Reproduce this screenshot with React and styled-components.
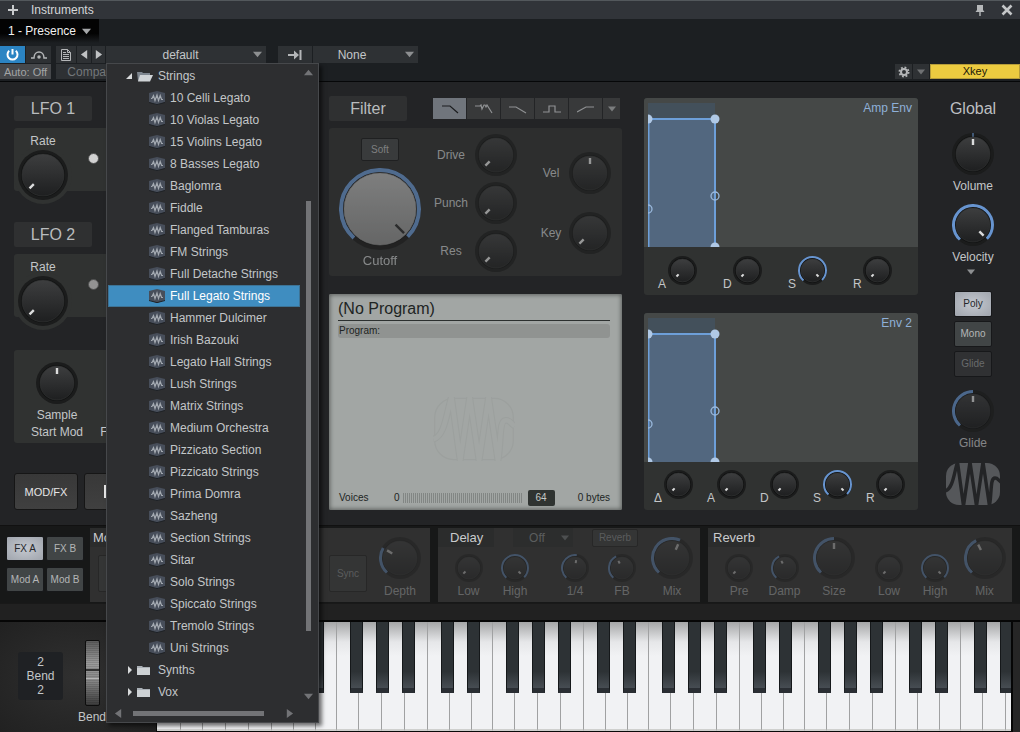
import { useId, useState } from "react";
import styled, { createGlobalStyle, css } from "styled-components";

const GlobalStyle = createGlobalStyle`
  * {
    box-sizing: border-box;
  }

  body {
    margin: 0;
    background: #232426;
    color: #c3c6c8;
    font-family: "Liberation Sans", Arial, sans-serif;
    font-size: 12px;
    line-height: 14px;
  }

  button, select, input {
    margin: 0;
    padding: 0;
    border: none;
    font: inherit;
    color: inherit;
  }

  h1, h2, h3, p, ul {
    margin: 0;
    padding: 0;
    font-weight: normal;
    list-style: none;
  }

  svg {
    display: block;
    flex: none;
  }
`;

/* ---------- data ---------- */

const presets = [
  "10 Celli Legato",
  "10 Violas Legato",
  "15 Violins Legato",
  "8 Basses Legato",
  "Baglomra",
  "Fiddle",
  "Flanged Tamburas",
  "FM Strings",
  "Full Detache Strings",
  "Full Legato Strings",
  "Hammer Dulcimer",
  "Irish Bazouki",
  "Legato Hall Strings",
  "Lush Strings",
  "Matrix Strings",
  "Medium Orchestra",
  "Pizzicato Section",
  "Pizzicato Strings",
  "Prima Domra",
  "Sazheng",
  "Section Strings",
  "Sitar",
  "Solo Strings",
  "Spiccato Strings",
  "Tremolo Strings",
  "Uni Strings",
];

const filterTypes = [
  { name: "Low pass", path: "M1 2 H9 L17 9" },
  { name: "Ladder", path: "M0 2 H5 L6 1 L7 5 L9 1 H10 L11 3 L12 1 L17 9" },
  { name: "Low pass 12", path: "M0 3 H7 L17 9" },
  { name: "Band pass", path: "M0 8 H6 V2 H12 V8 H18" },
  { name: "High pass", path: "M0 8 L9 3 H17" },
];

/* ---------- knob ---------- */

const KnobBox = styled.span`
  display: grid;
  grid-template: 100% / 100%;
  flex: none;
  width: ${(p) => p.$size}px;
  height: ${(p) => p.$size}px;

  > * {
    grid-area: 1 / 1;
  }

  input {
    min-width: 0;
    width: 100%;
    height: 100%;
    opacity: 0;
    cursor: pointer;
  }
`;

function point(center, radius, deg) {
  const rad = ((deg - 90) * Math.PI) / 180;
  return [center + radius * Math.cos(rad), center + radius * Math.sin(rad)];
}

function arc(center, radius, from, to) {
  const [x1, y1] = point(center, radius, from);
  const [x2, y2] = point(center, radius, to);
  const large = to - from > 180 ? 1 : 0;
  return `M${x1} ${y1} A${radius} ${radius} 0 ${large} 1 ${x2} ${y2}`;
}

function Knob({ size = 42, value = 0, fill = false, center = false, light = false, label }) {
  const [current, setCurrent] = useState(value);
  const id = useId();
  const c = size / 2;
  const small = size < 35;
  const ring = light ? 4 : small ? 2 : 3;
  const face = c - ring - 1;
  const deg = -135 + current * 270;
  const tip = face - (light ? 2 : small ? 3 : 2);
  const tail = tip - (light ? 12 : small ? 3 : 6);
  const [x1, y1] = point(c, tip, deg);
  const [x2, y2] = point(c, tail, deg);

  return (
    <KnobBox $size={size}>
      <svg width={size} height={size} viewBox={`0 0 ${size} ${size}`} aria-hidden="true">
        <defs>
          <linearGradient id={id} x1="0" y1="0" x2="0" y2="1">
            <stop offset="0" stopColor={light ? "#b4b5b5" : "#3d3e3f"} />
            <stop offset="1" stopColor={light ? "#8b8c8c" : "#1e1f20"} />
          </linearGradient>
        </defs>
        <circle cx={c} cy={c} r={c} fill="#1b1c1c" />
        <circle cx={c} cy={c} r={c - ring} fill="#101111" />
        {fill && current > 0 && (
          <path
            d={arc(c, c - ring / 2, -138, deg)}
            fill="none"
            stroke="#6794cf"
            strokeWidth={ring}
          />
        )}
        {center && <path d={`M${c} 0 V4`} stroke="#6794cf" />}
        <circle
          cx={c}
          cy={c}
          r={face}
          fill={`url(#${id})`}
          stroke={light ? "#9b9c9c" : "#343536"}
          strokeWidth="0.6"
        />
        <path
          d={`M${x1} ${y1} L${x2} ${y2}`}
          stroke={light ? "#2a2b2c" : "#dcdddd"}
          strokeWidth={small ? 2 : 2.4}
        />
      </svg>
      <input
        type="range"
        min="0"
        max="1"
        step="0.01"
        aria-label={label}
        value={current}
        onChange={(e) => setCurrent(Number(e.target.value))}
      />
    </KnobBox>
  );
}

/* ---------- title and tool bars ---------- */

const Page = styled.div`
  min-height: 100vh;
  display: flex;
  flex-direction: column;
`;

const TitleBar = styled.header`
  display: flex;
  align-items: center;
  height: 19px;
  padding: 0 7px;
  border-top: 1px solid #53585c;
  background: #313439;
  color: #d4d6d8;

  h1 {
    margin-left: 12px;
    margin-right: auto;
    font-size: 12px;
  }
`;

const IconButton = styled.button`
  display: flex;
  align-items: center;
  justify-content: center;
  background: none;
  cursor: pointer;
`;

const CloseButton = styled(IconButton)`
  margin-left: 16px;
`;

const TabBar = styled.nav`
  height: 27px;
  background: #1c1f22;
`;

const Tab = styled.button`
  display: flex;
  align-items: center;
  gap: 6px;
  height: 24px;
  padding: 0 8px;
  background: linear-gradient(#030303 60%, #1c1f22);
  color: #f1f1f1;
`;

const ToolBar = styled.div`
  display: flex;
  padding-bottom: 2px;
  border-bottom: 1px solid #060708;
  background: #1c1f22;
`;

const ToolGroup = styled.div`
  display: flex;
  flex-direction: column;
  gap: 1px;
  margin-right: ${(p) => p.$gap || 0}px;
`;

const ToolRow = styled.div`
  display: flex;
  gap: 1px;
`;

const ToolButton = styled.button`
  display: flex;
  align-items: center;
  justify-content: center;
  width: ${(p) => p.$width}px;
  height: ${(p) => (p.$low ? 15 : 17)}px;
  background: ${(p) => (p.$on ? "#2b84c3" : "#2e3134")};
  color: ${(p) => (p.$on ? "#fff" : "#b4b6b8")};
`;

const AutoButton = styled(ToolButton)`
  width: 51px;
  background: #46484b;
  color: #a3a5a6;
  font-size: 11px;
`;

const CompareButton = styled(ToolButton)`
  width: 72px;
  color: #73777a;
`;

const PresetCell = styled.div`
  position: relative;
`;

const PresetButton = styled(ToolButton)`
  width: 160px;
  padding-right: 4px;
  color: #c3c6c8;

  span {
    flex: 1;
    padding-left: 2px;
  }
`;

const SelectBox = styled.span`
  display: flex;
  align-items: center;
  width: ${(p) => p.$width}px;
  height: ${(p) => p.$height}px;
  padding-right: 4px;
  background: ${(p) => p.$bg};

  select {
    flex: 1;
    min-width: 0;
    padding-right: ${(p) => p.$shift || 0}px;
    appearance: none;
    background: none;
    text-align-last: center;
    outline: none;
  }
`;

const DeviceGroup = styled.div`
  display: flex;
  align-items: flex-end;
  gap: 1px;
  margin-left: auto;
`;

const DeviceButton = styled.button`
  width: 90px;
  height: 15px;
  border: 1px solid #b69d3a;
  background: #eccb40;
  color: #1a1708;
  font-size: 11px;
  line-height: 13px;
`;

/* ---------- preset menu ---------- */

const Menu = styled.div`
  position: absolute;
  top: 17px;
  left: 0;
  z-index: 10;
  width: 213px;
  padding: 1px;
  border: 1px solid #46484b;
  background: #2d2e30;
  box-shadow: 3px 3px 4px rgba(0, 0, 0, 0.55);
`;

const MenuBody = styled.div`
  display: flex;
`;

const Tree = styled.ul`
  flex: 1;
`;

const TreeItem = styled.li`
  display: flex;
  align-items: center;
  gap: 5px;
  height: 22px;
  padding-left: ${(p) => (p.$folder ? 18 : 41)}px;
  ${(p) =>
    p.$selected &&
    css`
      background: #3f8dc0;
      box-shadow: inset 0 0 0 1px #3d7395;
      color: #fff;
    `}
`;

const ScrollColumn = styled.div`
  display: flex;
  flex-direction: column;
  align-items: center;
  width: 17px;
  padding: 3px 0 2px;
`;

const ScrollThumb = styled.div`
  width: 5px;
  height: 430px;
  margin: 124px 0 auto;
  background: #727376;
`;

const ScrollRow = styled.div`
  display: flex;
  align-items: center;
  height: 18px;
  padding: 2px 23px 0 6px;
`;

const ScrollBar = styled.div`
  width: 131px;
  height: 5px;
  margin: 0 auto 0 10px;
  background: #727376;
`;

/* ---------- synth body ---------- */

const Body = styled.main`
  display: grid;
  grid-template-columns: 293fr 293fr 274fr 66fr;
  column-gap: 22px;
  padding: 14px 14px 15px;
  background: #232426;
`;

const Column = styled.section`
  display: flex;
  flex-direction: column;
  min-width: 0;
`;

const Plate = styled.h2`
  width: 78px;
  height: 25px;
  margin-bottom: 7px;
  border-radius: 2px;
  background: #2f3031;
  color: #b9bcbe;
  font-size: 16px;
  line-height: 25px;
  text-align: center;
`;

const LfoPanel = styled.div`
  display: flex;
  align-items: flex-start;
  height: 63px;
  margin-bottom: 31px;
  border-radius: 3px;
  background: #303231;
`;

const LfoRate = styled.label`
  display: flex;
  flex-direction: column;
  align-items: center;
  gap: 2px;
  padding-top: 6px;
`;

const LfoKnobRing = styled.span`
  padding: 4px;
  margin-top: -4px;
  border-radius: 50%;
  background: #303231;
`;

const Led = styled.button`
  width: 11px;
  height: 11px;
  margin: 25px 0 0 16px;
  border: 1px solid #4d4e4e;
  border-radius: 50%;
  background: ${(p) => (p.$on ? "#d2d2d2" : "#939393")};
`;

const SamplePanel = styled.div`
  display: flex;
  height: 93px;
  margin: 2px 0 30px;
  padding: 12px 7px;
  border-radius: 3px;
  background: #303231;
`;

const Field = styled.label`
  display: flex;
  flex-direction: column;
  align-items: center;
  gap: ${(p) => p.$gap || 4}px;
  width: ${(p) => (p.$width ? `${p.$width}px` : "auto")};
  text-align: center;
  line-height: ${(p) => p.$line || 14}px;
  opacity: ${(p) => (p.$dim ? 0.6 : 1)};
`;

const PageButtons = styled.div`
  display: flex;
  gap: 6px;
`;

const PageButton = styled.button`
  display: flex;
  align-items: center;
  justify-content: center;
  width: 64px;
  height: 37px;
  border: 1px solid #161616;
  border-radius: 3px;
  background: linear-gradient(#383838, #404040);
  color: #e6e6e6;
  font-size: 11px;
`;

const FilterHead = styled.div`
  display: flex;
  justify-content: space-between;
  align-items: flex-start;
`;

const TypeButtons = styled.div`
  display: flex;
  gap: 1px;
  padding: 2px 2px 0 0;
`;

const TypeButton = styled.button`
  display: flex;
  align-items: center;
  justify-content: center;
  width: ${(p) => (p.$narrow ? 17 : 33)}px;
  height: 21px;
  background: ${(p) => (p.$on ? "#70757c" : "#38393a")};
  color: ${(p) => (p.$on ? "#1b1c1e" : "#8f9193")};
`;

const FilterPanel = styled.div`
  display: flex;
  align-items: flex-start;
  height: 148px;
  margin-bottom: 18px;
  padding-left: 10px;
  border-radius: 3px;
  background: #2d2e2e;
`;

const Disabled = styled.div`
  display: flex;
  flex-direction: column;
  align-items: center;
  gap: ${(p) => p.$gap}px;
  margin: ${(p) => p.$margin};
  opacity: 0.6;
`;

const SideField = styled.label`
  display: flex;
  align-items: center;
  gap: 4px;

  > span:first-child {
    width: ${(p) => p.$label}px;
    text-align: center;
  }
`;

const SmallButton = styled.button`
  width: 38px;
  height: ${(p) => p.$height || 26}px;
  border: 1px solid #17181a;
  border-radius: 2px;
  background: ${(p) => (p.$on ? "radial-gradient(#c4c8cf, #a0a5ad)" : "#414546")};
  color: ${(p) => (p.$on ? "#24272a" : "#b4b6b7")};
  font-size: 10px;

  &:disabled {
    background: #303133;
    color: #696b6c;
  }
`;

const CutoffLabel = styled.span`
  font-size: 13px;
`;

const Display = styled.div`
  display: flex;
  flex-direction: column;
  flex: 1;
  padding: 6px 12px 4px 9px;
  border-radius: 2px;
  background: #a2a6a4;
  box-shadow: inset 0 0 4px 1px #5c605e;
  color: #202423;
  font-size: 10px;

  h2 {
    padding-bottom: 2px;
    border-bottom: 1px solid #2c302f;
    font-size: 16px;
    line-height: 18px;
  }
`;

const ProgramBar = styled.p`
  margin-top: 3px;
  padding-left: 1px;
  border-radius: 3px;
  background: #909391;
`;

const Watermark = styled.div`
  display: grid;
  flex: 1;
  justify-content: center;
  align-content: end;
  padding-bottom: 28px;
`;

const VoicesRow = styled.div`
  display: flex;
  align-items: center;
  height: 17px;
  padding-left: 1px;
`;

const VoiceLabel = styled.label`
  width: 55px;
`;

const VoiceMeter = styled.div`
  width: 120px;
  height: 10px;
  margin: 0 5px 0 3px;
  background: repeating-linear-gradient(90deg, #828684 0 1px, #a2a6a4 1px 2px);
`;

const VoiceCount = styled.input`
  width: 27px;
  height: 16px;
  border-radius: 2px;
  background: #2f3331;
  color: #c5c8c6;
  text-align: center;
`;

const Bytes = styled.span`
  margin-left: auto;
`;

const Envelope = styled.section`
  display: flex;
  flex-direction: column;
  margin-top: ${(p) => p.$top}px;
  border-radius: 3px;
  overflow: hidden;
  background: #303231;
`;

const EnvGraph = styled.div`
  display: flex;
  justify-content: space-between;
  height: 149px;
  padding: 5px 6px 0 4px;
  background: #454847;

  h2 {
    color: #8fb0d8;
    font-size: 12px;
    line-height: 11px;
  }
`;

const EnvKnobs = styled.div`
  display: grid;
  grid-auto-flow: column;
  grid-auto-columns: 1fr;
  height: 48px;
  padding: ${(p) => p.$padding};
`;

const EnvField = styled.label`
  display: flex;
  align-items: flex-end;
  justify-content: center;
  gap: 1px;
  height: 34px;

  > span:first-child {
    width: 9px;
    margin-bottom: -6px;
  }
`;

const GlobalColumn = styled(Column)`
  align-items: center;

  h2 {
    font-size: 16px;
    line-height: 25px;
    color: #bcbfc1;
    margin-bottom: 12px;
  }
`;

const VelocityField = styled(Field)`
  margin-top: 11px;
`;

const GlideField = styled(Field)`
  margin-bottom: 13px;
`;

const VelocityMenu = styled(IconButton)`
  height: 5px;
  margin: 5px 4px 17px 0;
`;

const ModeButtons = styled.div`
  display: flex;
  flex-direction: column;
  gap: 4px;
  margin-bottom: 13px;
`;

/* ---------- effects ---------- */

const Effects = styled.section`
  display: grid;
  grid-template-columns: 82px 340fr 262fr 304fr;
  column-gap: 8px;
  padding: 2px 8px 1px 0;
  border-top: 1px solid #111;
  background: #171818;
`;

const BankButtons = styled.div`
  display: grid;
  grid-template-columns: 38px 38px;
  align-content: start;
  gap: 6px 2px;
  padding: 8px 0 0 6px;
`;

const EffectPanel = styled.div`
  height: 74px;
  min-width: 0;
  background: #303030;
`;

const EffectHead = styled.div`
  display: flex;
  height: 19px;

  h3 {
    min-width: ${(p) => p.$title}px;
    padding-left: ${(p) => p.$pad}px;
    background: #2b2c2c;
    color: #c9cbcc;
    font-size: 13px;
    line-height: 19px;
  }
`;

const OffSelect = styled.div`
  margin: 0 19px;
  color: #5b5d5e;
`;

const FaintButton = styled.button`
  width: ${(p) => p.$width}px;
  height: ${(p) => p.$height}px;
  margin-top: ${(p) => p.$top || 0}px;
  border: 1px solid #272727;
  border-radius: 2px;
  background: #343535;
  color: #5a5c5d;
  font-size: ${(p) => p.$font || 11}px;
  line-height: 12px;
`;

const EffectKnobs = styled.div`
  display: grid;
  grid-template-columns: ${(p) => p.$columns};
  grid-template-rows: 100%;
  align-items: end;
  height: 55px;
  padding-bottom: 4px;
`;

const EffectField = styled.label`
  grid-column: ${(p) => p.$col};
  display: flex;
  flex-direction: column;
  align-items: center;
  gap: ${(p) => (p.$big ? 5 : 2)}px;
  opacity: 0.35;
`;

const SyncButton = styled(FaintButton)`
  grid-column: ${(p) => p.$col};
  align-self: end;
  margin: 0 0 6px;
`;

const Ledge = styled.div`
  height: 19px;
  border-top: 1px solid #191919;
  border-bottom: 2px solid #060606;
  background: #212121;
`;

/* ---------- keyboard ---------- */

const KeyboardSection = styled.section`
  display: flex;
  flex: 1;
  min-height: 110px;
  background: #202020;
`;

const BendArea = styled.div`
  display: flex;
  flex: none;
  align-items: flex-start;
  width: 157px;
  padding-left: 18px;
  border-right: 1px solid #0a0a0a;
  background: radial-gradient(#303030, #212121);
`;

const BendBox = styled.div`
  width: 45px;
  height: 48px;
  margin: 30px 12px 0 0;
  padding-top: 3px;
  border-radius: 3px;
  background: #1f2124;
  text-align: center;
`;

const Wheel = styled.label`
  display: flex;
  flex-direction: column;
  align-items: center;
  gap: 4px;
  width: 34px;
  padding-top: 18px;

  input {
    appearance: none;
    width: 15px;
    height: 66px;
    writing-mode: vertical-lr;
    border: 1px solid #0d0d0d;
    border-radius: 2px;
    background:
      linear-gradient(transparent 28px, #333 28px 30px, transparent 30px 37px, #b5b5b5 37px 38px, transparent 38px),
      repeating-linear-gradient(transparent 0 1px, rgba(0, 0, 0, 0.12) 1px 2px),
      linear-gradient(#5c5c5c, #9b9b9b 35%, #8a8a8a 60%, #3c3c3c);
  }

  input::-webkit-slider-thumb {
    appearance: none;
    width: 13px;
    height: 10px;
  }
`;

const Keys = styled.div`
  display: grid;
  flex: 1;
  min-width: 0;
  overflow: hidden;
  background: #f0f1f3;
  border-bottom: 1px solid #090909;

  > * {
    grid-area: 1 / 1;
  }
`;

const KeyRow = styled.div`
  display: flex;
  width: 0;
`;

const WhiteKey = styled.span`
  flex: none;
  width: ${(p) => p.$width}px;
  border-right: 1px solid #a0a1a2;
  border-bottom: 2px solid #cfd0ce;
  background: linear-gradient(#a5a6a7, #e6e7e9 20px, #f1f2f4 34px);
`;

const Slot = styled.span`
  flex: none;
  width: ${(p) => p.$width || 13}px;
`;

const BlackKey = styled(Slot)`
  height: 71px;
  border: 1px solid #15181a;
  border-top: none;
  border-bottom: 5px solid #2a2e33;
  background: linear-gradient(#2d3235 75%, #474d53);
`;

const KeyboardEnd = styled.div`
  width: 9px;
  border-left: 2px solid #060606;
  background: #262626;
`;

/* ---------- drawings ---------- */

function Triangle({ dir = "down", size = 8, color = "#8d8f91" }) {
  const paths = {
    down: "M0 2 H10 L5 8 Z",
    up: "M0 8 H10 L5 2 Z",
    left: "M8 0 V10 L1 5 Z",
    right: "M2 0 V10 L9 5 Z",
  };
  return (
    <svg width={size} height={size} viewBox="0 0 10 10" aria-hidden="true">
      <path d={paths[dir]} fill={color} />
    </svg>
  );
}

function PresetIcon() {
  return (
    <svg width="16" height="14" viewBox="0 0 16 14" aria-hidden="true">
      <path d="M0 2 L8 0 L16 2 V11 L8 14 L0 11 Z" fill="#474e5a" />
      <path d="M0 11.5 L8 13.6 L16 11.5" fill="none" stroke="#1f2226" />
      <path
        d="M2 7.5 H3 L4.5 4.5 L6 9.5 L8 4 L9.5 9.5 L11.2 4.5 L12.6 8.5 H14"
        fill="none"
        stroke="#a4aab1"
        strokeWidth="1.2"
      />
    </svg>
  );
}

function FolderIcon({ open }) {
  return (
    <svg width="16" height="11" viewBox="0 0 16 11" aria-hidden="true">
      {open ? (
        <>
          <path d="M0 1 H5 L6 2 H13 V10 H1 Z" fill="#7e868f" />
          <path d="M3 4 H16 L13 10.5 H1 Z" fill="#cfd3d6" />
        </>
      ) : (
        <>
          <path d="M0 1 H5 L6 2 H13 V10 H0 Z" fill="#aab0b6" />
          <path d="M0 3 H13 V10 H0 Z" fill="#cdd1d4" />
        </>
      )}
    </svg>
  );
}

const wave = "M-1 28 C7 26 8 10 11.5 -1 L17.5 43 L24 -1 L30.5 43 L37 -1 L43.5 43 C46 28 44 15 49 15 C52 15 52 17 55 19";

function WaveLogo() {
  return (
    <svg width="54" height="42" viewBox="0 0 54 42" aria-hidden="true">
      <rect width="54" height="42" rx="13" fill="#55575a" />
      <path d={wave} fill="none" stroke="#232426" strokeWidth="3.4" strokeLinejoin="bevel" />
    </svg>
  );
}

function WaveOutline() {
  return (
    <svg width="82" height="64" viewBox="-1 -1 56 44" aria-hidden="true">
      <rect width="54" height="42" rx="13" fill="none" stroke="#9ca09e" strokeWidth="0.8" />
      <path d={wave} fill="none" stroke="#9ca09e" strokeWidth="4.6" strokeLinejoin="bevel" />
      <path d={wave} fill="none" stroke="#a2a6a4" strokeWidth="3.2" strokeLinejoin="bevel" />
    </svg>
  );
}

function EnvelopeCurve({ lowLeft }) {
  return (
    <svg width="75" height="144" viewBox="0 0 75 144" aria-hidden="true">
      <rect width="67" height="16" fill="#43505b" />
      <rect y="16" width="67" height="128" fill="#52677f" />
      <path d="M0.5 144 V16 H67 V144" fill="none" stroke="#6d9fd9" strokeWidth="2" />
      <circle cx="0" cy="16" r="4.5" fill="#b0c9e6" />
      <circle cx="67" cy="16" r="4.5" fill="#b0c9e6" />
      <circle cx="67" cy="144" r="4.5" fill="#b0c9e6" />
      {lowLeft && <circle cx="0" cy="144" r="4.5" fill="#b0c9e6" />}
      <circle cx="67" cy="93" r="4" fill="none" stroke="#9ab9dd" strokeWidth="1.3" />
      <circle cx="0" cy="106" r="4" fill="none" stroke="#9ab9dd" strokeWidth="1.3" />
    </svg>
  );
}

/* ---------- sections ---------- */

function PresetMenu() {
  const [selected, setSelected] = useState("Full Legato Strings");

  return (
    <Menu>
      <MenuBody>
        <Tree role="tree" aria-label="Presets">
          <TreeItem $folder role="treeitem" aria-expanded="true">
            <svg width="6" height="6" viewBox="0 0 6 6" aria-hidden="true">
              <path d="M6 0 V6 H0 Z" fill="#d8dadb" />
            </svg>
            <FolderIcon open />
            Strings
          </TreeItem>
          {presets.map((name) => (
            <TreeItem
              key={name}
              role="treeitem"
              aria-selected={name === selected}
              $selected={name === selected}
              onClick={() => setSelected(name)}
            >
              <PresetIcon />
              {name}
            </TreeItem>
          ))}
          {["Synths", "Vox"].map((name) => (
            <TreeItem key={name} $folder role="treeitem" aria-expanded="false">
              <svg width="6" height="8" viewBox="0 0 6 8" aria-hidden="true">
                <path d="M2 0 L6 4 L2 8 Z" fill="#d8dadb" />
              </svg>
              <FolderIcon />
              {name}
            </TreeItem>
          ))}
        </Tree>
        <ScrollColumn>
          <Triangle dir="up" size={9} color="#727376" />
          <ScrollThumb />
          <Triangle size={9} color="#727376" />
        </ScrollColumn>
      </MenuBody>
      <ScrollRow>
        <Triangle dir="left" size={9} color="#727376" />
        <ScrollBar />
        <Triangle dir="right" size={9} color="#727376" />
      </ScrollRow>
    </Menu>
  );
}

function Tools() {
  const [open, setOpen] = useState(true);

  return (
    <ToolBar>
      <ToolGroup $gap={5}>
        <ToolRow>
          <ToolButton $width={25} $on aria-label="Power">
            <svg width="13" height="13" viewBox="0 0 13 13" fill="none" stroke="#fff" strokeWidth="2">
              <path d="M3.2 2.8 A5 5 0 1 0 9.8 2.8 M6.5 1 V6.5" />
            </svg>
          </ToolButton>
          <ToolButton $width={25} aria-label="Bypass">
            <svg width="16" height="10" viewBox="0 0 16 10" fill="none" stroke="#b4b6b8" strokeWidth="1.5">
              <path d="M0 8 H3 C3 0 13 0 13 8 H16" />
              <circle cx="8" cy="7" r="1" fill="#b4b6b8" />
            </svg>
          </ToolButton>
        </ToolRow>
        <AutoButton $low>Auto: Off</AutoButton>
      </ToolGroup>

      <ToolGroup $gap={12}>
        <ToolRow>
          <ToolButton $width={20} aria-label="Preset file">
            <svg width="10" height="12" viewBox="0 0 10 12" fill="none" stroke="#b4b6b8">
              <path d="M0.5 0.5 H6.5 L9.5 3.5 V11.5 H0.5 Z M6.5 0.5 V3.5 H9.5 M2 3.5 H5 M2 5.5 H8 M2 7.5 H8 M2 9.5 H8" />
            </svg>
          </ToolButton>
          <ToolButton $width={14} aria-label="Previous preset">
            <Triangle dir="left" size={9} color="#c0c2c4" />
          </ToolButton>
          <ToolButton $width={13} aria-label="Next preset">
            <Triangle dir="right" size={9} color="#c0c2c4" />
          </ToolButton>
          <PresetCell>
            <PresetButton aria-haspopup="tree" aria-expanded={open} onClick={() => setOpen(!open)}>
              <span>default</span>
              <Triangle size={9} />
            </PresetButton>
            {open && <PresetMenu />}
          </PresetCell>
        </ToolRow>
        <CompareButton $low>Compare</CompareButton>
      </ToolGroup>

      <ToolRow>
        <ToolButton $width={34} aria-label="Route">
          <svg width="14" height="10" viewBox="0 0 14 10" fill="#b4b6b8">
            <path d="M0 4 H6 V0.5 L11 5 L6 9.5 V6 H0 Z M11.5 0 H13.5 V10 H11.5 Z" />
          </svg>
        </ToolButton>
        <SelectBox $width={105} $height={17} $shift={14} $bg="#2e3134">
          <select aria-label="Output">
            <option>None</option>
          </select>
          <Triangle size={9} />
        </SelectBox>
      </ToolRow>

      <DeviceGroup>
        <ToolButton $width={17} $low aria-label="Settings">
          <svg width="12" height="12" viewBox="-6 -6 12 12" fill="none" stroke="#b4b6b8">
            <circle r="3" strokeWidth="2" />
            <circle r="4.6" strokeWidth="1.8" strokeDasharray="1.8 1.81" />
          </svg>
        </ToolButton>
        <ToolButton $width={16} $low aria-label="Device options">
          <Triangle color="#6f7173" />
        </ToolButton>
        <DeviceButton>Xkey</DeviceButton>
      </DeviceGroup>
    </ToolBar>
  );
}

function Lfo({ title, on }) {
  return (
    <>
      <Plate>{title}</Plate>
      <LfoPanel>
        <LfoRate>
          Rate
          <LfoKnobRing>
            <Knob size={50} label={`${title} rate`} />
          </LfoKnobRing>
        </LfoRate>
        <Led $on={on} aria-label={`${title} sync`} />
      </LfoPanel>
    </>
  );
}

function FilterColumn() {
  const [type, setType] = useState(0);

  return (
    <Column>
      <FilterHead>
        <Plate>Filter</Plate>
        <TypeButtons>
          {filterTypes.map((item, i) => (
            <TypeButton
              key={item.name}
              $on={i === type}
              aria-label={item.name}
              aria-pressed={i === type}
              onClick={() => setType(i)}
            >
              <svg width="18" height="10" viewBox="0 0 18 10" fill="none" stroke="currentColor" strokeWidth="1.2">
                <path d={item.path} />
              </svg>
            </TypeButton>
          ))}
          <TypeButton $narrow aria-label="More filters">
            <Triangle color="#7b7d7e" />
          </TypeButton>
        </TypeButtons>
      </FilterHead>
      <FilterPanel>
        <Disabled $gap={7} $margin="10px 10px 0 0">
          <SmallButton $height={23}>Soft</SmallButton>
          <Field $gap={4}>
            <Knob size={82} value={1} fill light label="Cutoff" />
            <CutoffLabel>Cutoff</CutoffLabel>
          </Field>
        </Disabled>
        <Disabled $gap={6} $margin="6px 20px 0 0">
          {["Drive", "Punch", "Res"].map((name) => (
            <SideField key={name} $label={40}>
              <span>{name}</span>
              <Knob label={name} />
            </SideField>
          ))}
        </Disabled>
        <Disabled $gap={18} $margin="24px 0 0 0">
          <SideField $label={28}>
            <span>Vel</span>
            <Knob value={0.5} label="Velocity to cutoff" />
          </SideField>
          <SideField $label={28}>
            <span>Key</span>
            <Knob label="Key to cutoff" />
          </SideField>
        </Disabled>
      </FilterPanel>
      <Display>
        <h2>(No Program)</h2>
        <ProgramBar>Program:</ProgramBar>
        <Watermark>
          <WaveOutline />
        </Watermark>
        <VoicesRow>
          <VoiceLabel htmlFor="voices">Voices</VoiceLabel>
          0
          <VoiceMeter />
          <VoiceCount id="voices" defaultValue="64" />
          <Bytes>0 bytes</Bytes>
        </VoicesRow>
      </Display>
    </Column>
  );
}

function EnvelopePanel({ title, top, knobs, padding, lowLeft }) {
  return (
    <Envelope $top={top}>
      <EnvGraph>
        <EnvelopeCurve lowLeft={lowLeft} />
        <h2>{title}</h2>
      </EnvGraph>
      <EnvKnobs $padding={padding}>
        {knobs.map((name) => (
          <EnvField key={name}>
            <span>{name}</span>
            <Knob size={29} value={name === "S" ? 1 : 0} fill label={`${title} ${name}`} />
          </EnvField>
        ))}
      </EnvKnobs>
    </Envelope>
  );
}

function GlobalControls() {
  return (
    <GlobalColumn>
      <h2>Global</h2>
      <Field>
        <Knob value={0.5} center label="Volume" />
        Volume
      </Field>
      <VelocityField>
        <Knob value={1} fill label="Velocity" />
        Velocity
      </VelocityField>
      <VelocityMenu aria-label="Velocity options">
        <Triangle />
      </VelocityMenu>
      <ModeButtons>
        <SmallButton $on>Poly</SmallButton>
        <SmallButton>Mono</SmallButton>
        <SmallButton disabled>Glide</SmallButton>
      </ModeButtons>
      <GlideField $dim>
        <Knob value={0.5} fill label="Glide" />
        Glide
      </GlideField>
      <WaveLogo />
    </GlobalColumn>
  );
}

function EffectKnob({ name, col, value = 0, big }) {
  return (
    <EffectField $col={col} $big={big}>
      <Knob size={big ? 42 : 28} value={value} fill label={name} />
      {name}
    </EffectField>
  );
}

function EffectsStrip() {
  return (
    <Effects>
      <BankButtons>
        <SmallButton $height={25} $on>FX A</SmallButton>
        <SmallButton $height={25}>FX B</SmallButton>
        <SmallButton $height={25}>Mod A</SmallButton>
        <SmallButton $height={25}>Mod B</SmallButton>
      </BankButtons>

      <EffectPanel>
        <EffectHead $title={70} $pad={3}>
          <h3>Modulation</h3>
        </EffectHead>
        <EffectKnobs $columns="8fr 38fr 193fr 38fr 6fr 54fr 3fr">
          <SyncButton $col={2} $height={37}>
            Mod
          </SyncButton>
          <SyncButton $col={4} $height={37} $font={10}>
            Sync
          </SyncButton>
          <EffectKnob name="Depth" col={6} value={0.28} big />
        </EffectKnobs>
      </EffectPanel>

      <EffectPanel>
        <EffectHead $title={56} $pad={12}>
          <h3>Delay</h3>
          <OffSelect>
            <SelectBox $width={60} $height={19} $bg="#2c2d2d">
              <select aria-label="Delay mode">
                <option>Off</option>
              </select>
              <Triangle color="#4d4f50" />
            </SelectBox>
          </OffSelect>
          <FaintButton $width={46} $height={18} $top={1} $font={10}>
            Reverb
          </FaintButton>
        </EffectHead>
        <EffectKnobs $columns="7fr 47fr 46fr 13fr 48fr 46fr 54fr 1fr">
          <EffectKnob name="Low" col={2} />
          <EffectKnob name="High" col={3} value={1} />
          <EffectKnob name="1/4" col={5} value={0.53} />
          <EffectKnob name="FB" col={6} value={0.4} />
          <EffectKnob name="Mix" col={7} value={0.59} big />
        </EffectKnobs>
      </EffectPanel>

      <EffectPanel>
        <EffectHead $title={52} $pad={5}>
          <h3>Reverb</h3>
        </EffectHead>
        <EffectKnobs $columns="8fr 46fr 45fr 54fr 6fr 44fr 48fr 51fr 2fr">
          <EffectKnob name="Pre" col={2} />
          <EffectKnob name="Damp" col={3} value={0.4} />
          <EffectKnob name="Size" col={4} value={0.5} big />
          <EffectKnob name="Low" col={6} />
          <EffectKnob name="High" col={7} value={1} />
          <EffectKnob name="Mix" col={8} value={0.4} big />
        </EffectKnobs>
      </EffectPanel>
    </Effects>
  );
}

// the lowest visible key is E, so every pattern starts at F
const whiteWidths = [22, 23, 23, 23, 22, 22, 21];
const blackPattern = [0, 1, 0, 1, 0, 1, 0, 0, 1, 0, 1, 0];
const octaves = [...Array(12).keys()];

function Keyboard() {
  return (
    <KeyboardSection>
      <BendArea>
        <BendBox>
          2<br />
          Bend
          <br />2
        </BendBox>
        <Wheel>
          <input type="range" />
          Bend
        </Wheel>
        <Wheel>
          <input type="range" />
          Mod
        </Wheel>
      </BendArea>
      <Keys>
        <KeyRow>
          <WhiteKey $width={24} />
          {octaves.map((o) => whiteWidths.map((w, i) => <WhiteKey key={`${o}-${i}`} $width={w} />))}
        </KeyRow>
        <KeyRow>
          <Slot $width={24} />
          {octaves.map((o) =>
            blackPattern.map((black, i) =>
              black ? <BlackKey key={`${o}-${i}`} /> : <Slot key={`${o}-${i}`} />
            )
          )}
        </KeyRow>
      </Keys>
      <KeyboardEnd />
    </KeyboardSection>
  );
}

function App() {
  return (
    <Page>
      <GlobalStyle />
      <TitleBar>
        <IconButton aria-label="Add instrument">
          <svg width="12" height="12" viewBox="0 0 12 12" stroke="#c9cbcd" strokeWidth="2">
            <path d="M6 1 V11 M1 6 H11" />
          </svg>
        </IconButton>
        <h1>Instruments</h1>
        <IconButton aria-label="Pin">
          <svg width="10" height="12" viewBox="0 0 10 12" fill="#b5b7b9">
            <path d="M2 1 H8 V6 L9.5 8 H0.5 L2 6 Z M4.3 8 H5.7 V12 H4.3 Z" />
          </svg>
        </IconButton>
        <CloseButton aria-label="Close">
          <svg width="12" height="12" viewBox="0 0 12 12" stroke="#c4c6c8" strokeWidth="2.6">
            <path d="M1.5 1.5 L10.5 10.5 M10.5 1.5 L1.5 10.5" />
          </svg>
        </CloseButton>
      </TitleBar>
      <TabBar>
        <Tab>
          1 - Presence
          <Triangle size={9} color="#a6a8aa" />
        </Tab>
      </TabBar>
      <Tools />
      <Body>
        <Column>
          <Lfo title="LFO 1" on />
          <Lfo title="LFO 2" />
          <SamplePanel>
            <Field $width={72} $gap={3} $line={17}>
              <Knob value={0.5} label="Sample Start Mod" />
              <span>
                Sample
                <br />
                Start Mod
              </span>
            </Field>
            <Field $width={68} $gap={3} $line={17}>
              <Knob value={0.5} label="Filter Mod" />
              <span>
                &nbsp;
                <br />
                Filter Mod
              </span>
            </Field>
          </SamplePanel>
          <PageButtons>
            <PageButton>MOD/FX</PageButton>
            <PageButton aria-label="Keyboard">
              <svg width="24" height="13" viewBox="0 0 24 13" fill="#e6e6e6" aria-hidden="true">
                <path d="M0 0 H7 V13 H0 Z M8 0 H15 V13 H8 Z M16 0 H24 V13 H16 Z" />
              </svg>
            </PageButton>
          </PageButtons>
        </Column>

        <FilterColumn />

        <Column>
          <EnvelopePanel title="Amp Env" top={2} knobs={["A", "D", "S", "R"]} padding="4px 13px 0 1px" />
          <EnvelopePanel title="Env 2" top={18} knobs={["Δ", "A", "D", "S", "R"]} padding="3px 6px 0 3px" lowLeft />
        </Column>

        <GlobalControls />
      </Body>
      <EffectsStrip />
      <Ledge />
      <Keyboard />
    </Page>
  );
}

export default App;
